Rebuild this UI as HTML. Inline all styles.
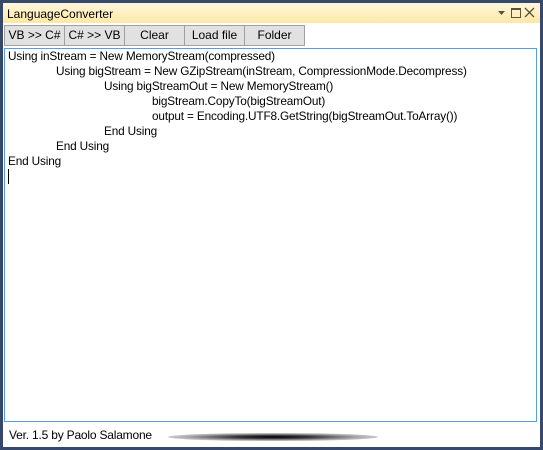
<!DOCTYPE html>
<html><head><style>
*{margin:0;padding:0;box-sizing:border-box}
body{width:543px;height:450px;background:#36486b;position:relative;overflow:hidden;font-family:"Liberation Sans",sans-serif;font-size:12px;color:#000}
#win{position:absolute;left:3px;top:3px;width:537px;height:444px;background:#fff;border-top-right-radius:4px}
#title{position:absolute;left:0;top:0;width:537px;height:20px;background:linear-gradient(#fff7dd,#ffe8a6);padding:4px 0 0 4px;font-size:12px}
.btn{position:absolute;top:22px;height:21px;width:61px;background:#e1e1e1;border:1px solid #a0a0a0;text-align:center;line-height:19px;font-size:12px}
#box{position:absolute;left:1px;top:45px;width:533px;height:374px;border:1px solid #569de5;padding:0 0 0 3px}
.l{height:15px;line-height:15px;white-space:pre;font-size:11.8px;letter-spacing:-0.15px}
#foot{position:absolute;left:6px;top:425px;font-size:12px;letter-spacing:-0.2px}
#bar{position:absolute;left:165px;top:430px;width:210px;height:8px;border-radius:50%;background:radial-gradient(ellipse at center,#000 0%,#333 25%,rgba(0,0,0,0.3) 60%,rgba(0,0,0,0) 100%)}
</style></head><body>
<div id="win">
<div id="title">LanguageConverter
<svg style="position:absolute;right:4px;top:4px" width="40" height="12"><path d="M2 4h7l-3.5 4z" fill="#5c5236"/><rect x="15.5" y="1.5" width="9" height="9" fill="none" stroke="#5c5236"/><rect x="15" y="1" width="10" height="2" fill="#5c5236"/><path d="M29 1l9 9M38 1l-9 9" stroke="#5c5236" stroke-width="1.3"/></svg>
</div>
<div class="btn" style="left:1px">VB &gt;&gt; C#</div>
<div class="btn" style="left:61px">C# &gt;&gt; VB</div>
<div class="btn" style="left:121px">Clear</div>
<div class="btn" style="left:181px">Load file</div>
<div class="btn" style="left:241px">Folder</div>
<div id="box">
<div class="l">Using inStream = New MemoryStream(compressed)</div>
<div class="l" style="padding-left:48px">Using bigStream = New GZipStream(inStream, CompressionMode.Decompress)</div>
<div class="l" style="padding-left:96px">Using bigStreamOut = New MemoryStream()</div>
<div class="l" style="padding-left:144px">bigStream.CopyTo(bigStreamOut)</div>
<div class="l" style="padding-left:144px">output = Encoding.UTF8.GetString(bigStreamOut.ToArray())</div>
<div class="l" style="padding-left:96px">End Using</div>
<div class="l" style="padding-left:48px">End Using</div>
<div class="l">End Using</div>
<div style="width:1px;height:15px;background:#000"></div>
</div>
<div id="foot">Ver. 1.5 by Paolo Salamone</div>
<div id="bar"></div>
</div>
</body></html>
